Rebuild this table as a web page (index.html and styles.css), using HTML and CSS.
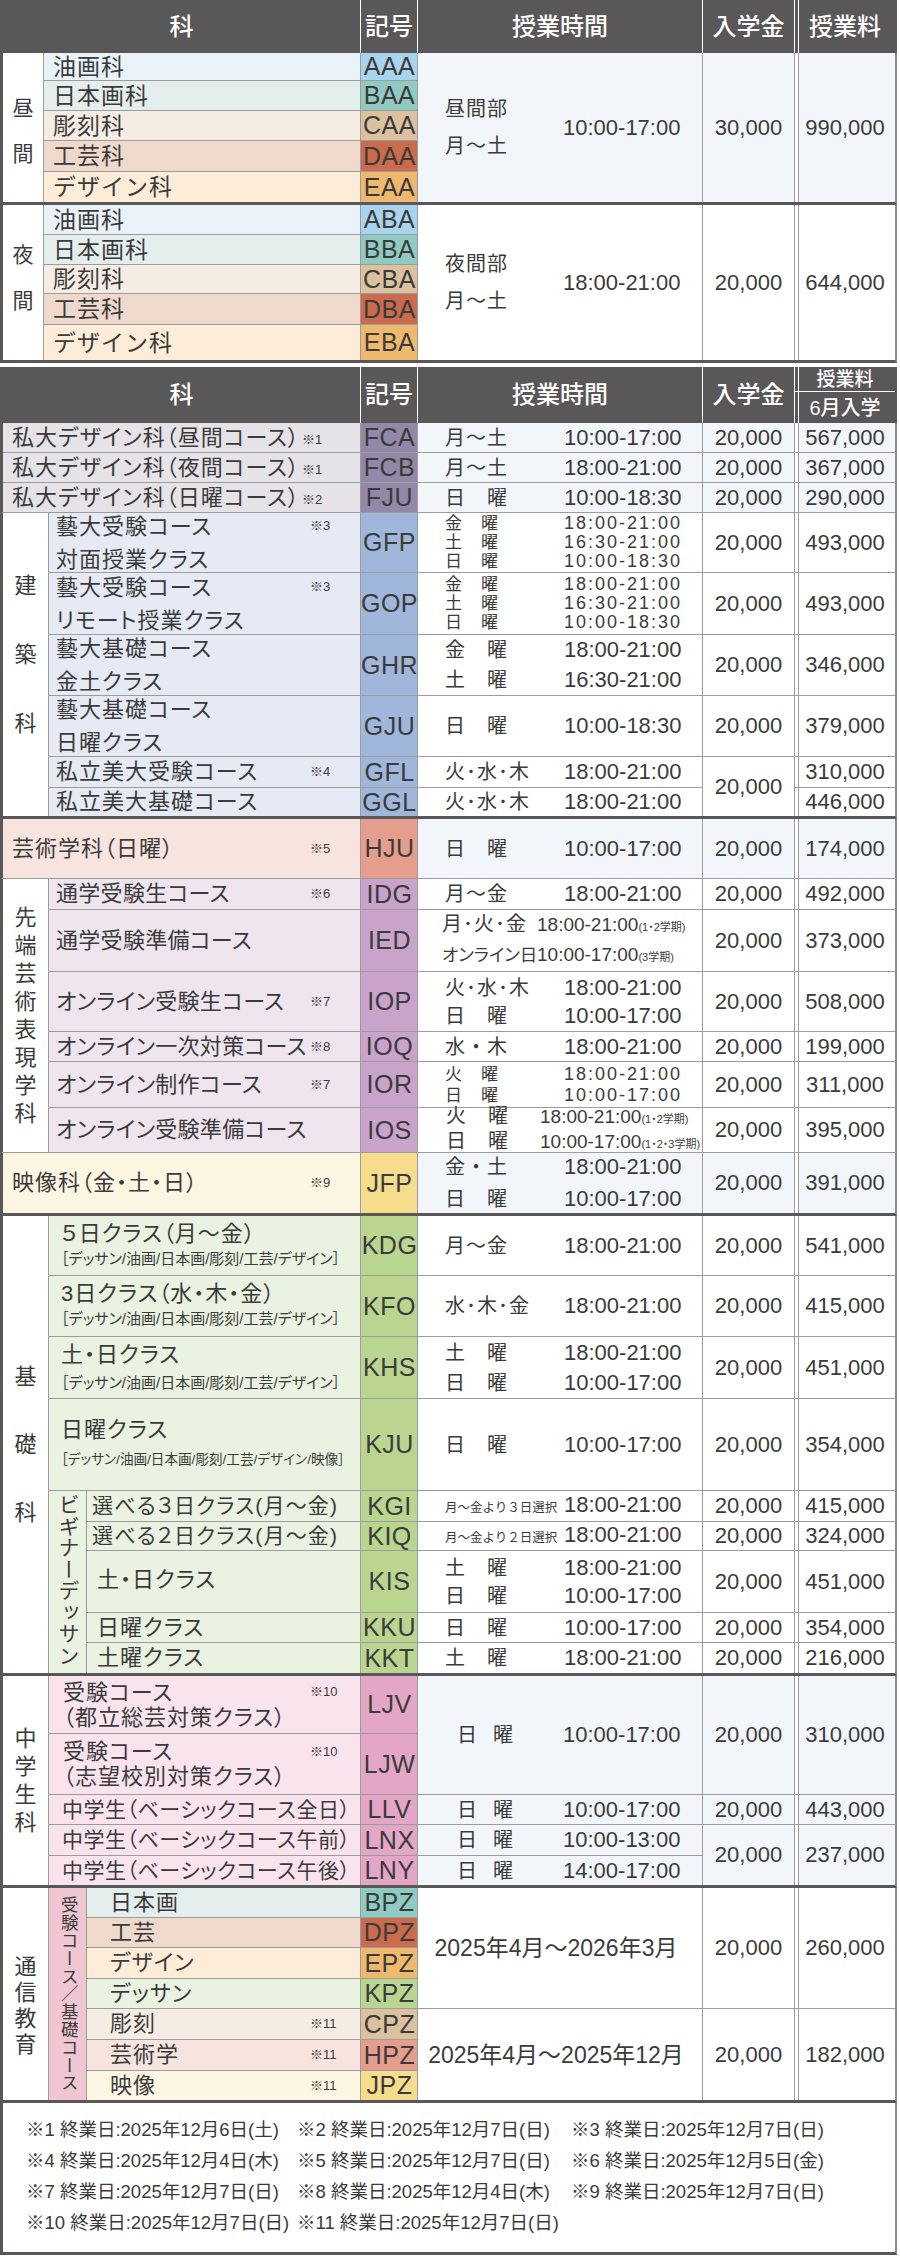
FILE: index.html
```html
<!DOCTYPE html>
<html lang="ja">
<head>
<meta charset="utf-8">
<title>授業時間・学費一覧</title>
<link rel="stylesheet" href="styles.css">
</head>
<body>
<div class="page">

  <div class="hd hd1">
    <div class="h">科</div>
    <div class="h">記号</div>
    <div class="h">授業時間</div>
    <div class="h">入学金</div>
    <div class="h ht">授業料</div>
  </div>

  <div class="sec g1 rDay thick">
    <div class="c lab l1 r5 pt6"><span>昼</span><span>間</span></div>
    <div class="c nm1 nOil">油画科</div>
    <div class="c cd cOil">AAA</div>
    <div class="c tm1 r5 bl">
      <div class="tp"><span>昼間部</span><span>月～土</span></div>
      <span class="t">10:00-17:00</span>
    </div>
    <div class="c fe r5 bl">30,000</div>
    <div class="c tu r5 bl">990,000</div>
    <div class="c nm1 nNih">日本画科</div>
    <div class="c cd cNih">BAA</div>
    <div class="c nm1 nCho">彫刻科</div>
    <div class="c cd cCho">CAA</div>
    <div class="c nm1 nKog">工芸科</div>
    <div class="c cd cKog">DAA</div>
    <div class="c nm1 nDes">デザイン科</div>
    <div class="c cd cDes">EAA</div>
  </div>

  <div class="sec g1 rNight thick">
    <div class="c lab l1 r5 pb10"><span>夜</span><span>間</span></div>
    <div class="c nm1 nOil">油画科</div>
    <div class="c cd cOil">ABA</div>
    <div class="c tm1 r5">
      <div class="tp"><span>夜間部</span><span>月～土</span></div>
      <span class="t">18:00-21:00</span>
    </div>
    <div class="c fe r5">20,000</div>
    <div class="c tu r5">644,000</div>
    <div class="c nm1 nNih">日本画科</div>
    <div class="c cd cNih">BBA</div>
    <div class="c nm1 nCho">彫刻科</div>
    <div class="c cd cCho">CBA</div>
    <div class="c nm1 nKog">工芸科</div>
    <div class="c cd cKog">DBA</div>
    <div class="c nm1 nDes">デザイン科</div>
    <div class="c cd cDes">EBA</div>
  </div>

  <div class="hd hd2">
    <div class="h r2">科</div>
    <div class="h r2">記号</div>
    <div class="h r2">授業時間</div>
    <div class="h r2">入学金</div>
    <div class="h ht hs">授業料</div>
    <div class="h ht hs2">6月入学</div>
  </div>

  <!-- 私大デザイン科 -->
  <div class="sec g2 rA thin">
    <div class="c nm cs3 p9 nShi"><div class="ln">私大デザイン科（昼間コース）<span class="ns">※1</span></div></div>
    <div class="c cd cShi">FCA</div>
    <div class="c tm bl"><div class="tl"><span class="d">月～土</span><span class="t">10:00-17:00</span></div></div>
    <div class="c fe bl">20,000</div>
    <div class="c tu bl">567,000</div>

    <div class="c nm cs3 p9 nShi"><div class="ln">私大デザイン科（夜間コース）<span class="ns">※1</span></div></div>
    <div class="c cd cShi">FCB</div>
    <div class="c tm bl"><div class="tl"><span class="d">月～土</span><span class="t">18:00-21:00</span></div></div>
    <div class="c fe bl">20,000</div>
    <div class="c tu bl">367,000</div>

    <div class="c nm cs3 p9 nShi"><div class="ln">私大デザイン科（日曜コース）<span class="ns">※2</span></div></div>
    <div class="c cd cShi">FJU</div>
    <div class="c tm bl"><div class="tl"><span class="d">日　曜</span><span class="t">10:00-18:30</span></div></div>
    <div class="c fe bl">20,000</div>
    <div class="c tu bl">290,000</div>
  </div>

  <!-- 建築科 -->
  <div class="sec g2 rB thick">
    <div class="c lab r6 gap47 pb20"><span>建</span><span>築</span><span>科</span></div>

    <div class="c nm two cs2 p7 nKen"><div class="ln">藝大受験コース<span class="nt">※3</span></div><div class="ln">対面授業クラス</div></div>
    <div class="c cd cKen">GFP</div>
    <div class="c tm lh19 tight">
      <div class="tl"><span class="d">金　曜</span><span class="t">18:00-21:00</span></div>
      <div class="tl"><span class="d">土　曜</span><span class="t">16:30-21:00</span></div>
      <div class="tl"><span class="d">日　曜</span><span class="t">10:00-18:30</span></div>
    </div>
    <div class="c fe">20,000</div>
    <div class="c tu">493,000</div>

    <div class="c nm two cs2 p7 nKen"><div class="ln">藝大受験コース<span class="nt">※3</span></div><div class="ln">リモート授業クラス</div></div>
    <div class="c cd cKen">GOP</div>
    <div class="c tm lh19 tight">
      <div class="tl"><span class="d">金　曜</span><span class="t">18:00-21:00</span></div>
      <div class="tl"><span class="d">土　曜</span><span class="t">16:30-21:00</span></div>
      <div class="tl"><span class="d">日　曜</span><span class="t">10:00-18:30</span></div>
    </div>
    <div class="c fe">20,000</div>
    <div class="c tu">493,000</div>

    <div class="c nm two cs2 p7 nKen"><div class="ln">藝大基礎コース</div><div class="ln">金土クラス</div></div>
    <div class="c cd cKen">GHR</div>
    <div class="c tm">
      <div class="tl"><span class="d">金　曜</span><span class="t">18:00-21:00</span></div>
      <div class="tl"><span class="d">土　曜</span><span class="t">16:30-21:00</span></div>
    </div>
    <div class="c fe">20,000</div>
    <div class="c tu">346,000</div>

    <div class="c nm two cs2 p7 nKen"><div class="ln">藝大基礎コース</div><div class="ln">日曜クラス</div></div>
    <div class="c cd cKen">GJU</div>
    <div class="c tm"><div class="tl"><span class="d">日　曜</span><span class="t">10:00-18:30</span></div></div>
    <div class="c fe">20,000</div>
    <div class="c tu">379,000</div>

    <div class="c nm cs2 p7 nKen"><div class="ln">私立美大受験コース<span class="nt">※4</span></div></div>
    <div class="c cd cKen">GFL</div>
    <div class="c tm"><div class="tl"><span class="d">火･水･木</span><span class="t">18:00-21:00</span></div></div>
    <div class="c fe r2">20,000</div>
    <div class="c tu">310,000</div>

    <div class="c nm cs2 p7 nKen"><div class="ln">私立美大基礎コース</div></div>
    <div class="c cd cKen">GGL</div>
    <div class="c tm"><div class="tl"><span class="d">火･水･木</span><span class="t">18:00-21:00</span></div></div>
    <div class="c tu">446,000</div>
  </div>

  <!-- 芸術学科 -->
  <div class="sec g2 rC thin">
    <div class="c nm cs3 p9 nGei"><div class="ln">芸術学科（日曜）<span class="nt">※5</span></div></div>
    <div class="c cd cGei">HJU</div>
    <div class="c tm bl"><div class="tl"><span class="d">日　曜</span><span class="t">10:00-17:00</span></div></div>
    <div class="c fe bl">20,000</div>
    <div class="c tu bl">174,000</div>
  </div>

  <!-- 先端芸術表現学科 -->
  <div class="sec g2 rD thin">
    <div class="c lab r6 gap6"><span>先</span><span>端</span><span>芸</span><span>術</span><span>表</span><span>現</span><span>学</span><span>科</span></div>

    <div class="c nm nd cs2 p7 nSen"><div class="ln">通学受験生コース<span class="nt">※6</span></div></div>
    <div class="c cd cSen">IDG</div>
    <div class="c tm"><div class="tl"><span class="d">月～金</span><span class="t">18:00-21:00</span></div></div>
    <div class="c fe">20,000</div>
    <div class="c tu">492,000</div>

    <div class="c nm nd cs2 p7 nSen"><div class="ln">通学受験準備コース</div></div>
    <div class="c cd cSen">IED</div>
    <div class="c tm tw">
      <div class="tl"><span class="d">月･火･金</span><span class="t">18:00-21:00<span class="q">(1・2学期)</span></span></div>
      <div class="tl"><span class="d dp">オンライン日</span><span class="t">10:00-17:00<span class="q">(3学期)</span></span></div>
    </div>
    <div class="c fe">20,000</div>
    <div class="c tu">373,000</div>

    <div class="c nm nd cs2 p7 nSen"><div class="ln">オンライン受験生コース<span class="nt">※7</span></div></div>
    <div class="c cd cSen">IOP</div>
    <div class="c tm lh28">
      <div class="tl"><span class="d">火･水･木</span><span class="t">18:00-21:00</span></div>
      <div class="tl"><span class="d">日　曜</span><span class="t">10:00-17:00</span></div>
    </div>
    <div class="c fe">20,000</div>
    <div class="c tu">508,000</div>

    <div class="c nm nd cs2 p7 nSen"><div class="ln">オンライン一次対策コース<span class="nt">※8</span></div></div>
    <div class="c cd cSen">IOQ</div>
    <div class="c tm"><div class="tl"><span class="d">水・木</span><span class="t">18:00-21:00</span></div></div>
    <div class="c fe">20,000</div>
    <div class="c tu">199,000</div>

    <div class="c nm nd cs2 p7 nSen"><div class="ln">オンライン制作コース<span class="nt">※7</span></div></div>
    <div class="c cd cSen">IOR</div>
    <div class="c tm lh20 tight">
      <div class="tl"><span class="d">火　曜</span><span class="t">18:00-21:00</span></div>
      <div class="tl"><span class="d">日　曜</span><span class="t">10:00-17:00</span></div>
    </div>
    <div class="c fe">20,000</div>
    <div class="c tu">311,000</div>

    <div class="c nm nd cs2 p7 nSen"><div class="ln">オンライン受験準備コース</div></div>
    <div class="c cd cSen">IOS</div>
    <div class="c tm tos">
      <div class="tl"><span class="d">火　曜</span><span class="t">18:00-21:00<span class="q">(1・2学期)</span></span></div>
      <div class="tl"><span class="d">日　曜</span><span class="t">10:00-17:00<span class="q">(1・2・3学期)</span></span></div>
    </div>
    <div class="c fe">20,000</div>
    <div class="c tu">395,000</div>
  </div>

  <!-- 映像科 -->
  <div class="sec g2 rE thick">
    <div class="c nm cs3 p9 nEiz"><div class="ln">映像科（金・土・日）<span class="nt">※9</span></div></div>
    <div class="c cd cEiz">JFP</div>
    <div class="c tm bl lh32">
      <div class="tl"><span class="d">金・土</span><span class="t">18:00-21:00</span></div>
      <div class="tl"><span class="d">日　曜</span><span class="t">10:00-17:00</span></div>
    </div>
    <div class="c fe bl">20,000</div>
    <div class="c tu bl">391,000</div>
  </div>

  <!-- 基礎科 -->
  <div class="sec g2 rF thick">
    <div class="c lab r9 gap46"><span>基</span><span>礎</span><span>科</span></div>

    <div class="c nm cs2 p12 nKis"><div class="ln lh26">５日クラス（月～金）</div><div class="ln sm lh24">［デッサン/油画/日本画/彫刻/工芸/デザイン］</div></div>
    <div class="c cd cKis">KDG</div>
    <div class="c tm"><div class="tl"><span class="d">月～金</span><span class="t">18:00-21:00</span></div></div>
    <div class="c fe">20,000</div>
    <div class="c tu">541,000</div>

    <div class="c nm cs2 p12 nKis"><div class="ln lh26">3日クラス（水・木・金）</div><div class="ln sm lh24">［デッサン/油画/日本画/彫刻/工芸/デザイン］</div></div>
    <div class="c cd cKis">KFO</div>
    <div class="c tm"><div class="tl"><span class="d">水･木･金</span><span class="t">18:00-21:00</span></div></div>
    <div class="c fe">20,000</div>
    <div class="c tu">415,000</div>

    <div class="c nm cs2 p12 nKis"><div class="ln lh30">土・日クラス</div><div class="ln sm lh26">［デッサン/油画/日本画/彫刻/工芸/デザイン］</div></div>
    <div class="c cd cKis">KHS</div>
    <div class="c tm">
      <div class="tl"><span class="d">土　曜</span><span class="t">18:00-21:00</span></div>
      <div class="tl"><span class="d">日　曜</span><span class="t">10:00-17:00</span></div>
    </div>
    <div class="c fe">20,000</div>
    <div class="c tu">451,000</div>

    <div class="c nm cs2 p12 nKis"><div class="ln lh30">日曜クラス</div><div class="ln sm2 lh30">［デッサン/油画/日本画/彫刻/工芸/デザイン/映像］</div></div>
    <div class="c cd cKis">KJU</div>
    <div class="c tm"><div class="tl"><span class="d">日　曜</span><span class="t">10:00-17:00</span></div></div>
    <div class="c fe">20,000</div>
    <div class="c tu">354,000</div>

    <div class="c sub r5 nKis"><span class="vt">ビギナーデッサン</span></div>
    <div class="c nm p5 nKis nb"><div class="ln">選べる３日クラス(月～金)</div></div>
    <div class="c cd cKis">KGI</div>
    <div class="c tm"><div class="tl"><span class="d sd">月～金より３日選択</span><span class="t">18:00-21:00</span></div></div>
    <div class="c fe">20,000</div>
    <div class="c tu">415,000</div>

    <div class="c nm p5 nKis nb"><div class="ln">選べる２日クラス(月～金)</div></div>
    <div class="c cd cKis">KIQ</div>
    <div class="c tm"><div class="tl"><span class="d sd">月～金より２日選択</span><span class="t">18:00-21:00</span></div></div>
    <div class="c fe">20,000</div>
    <div class="c tu">324,000</div>

    <div class="c nm p10 nKis pb4"><div class="ln">土・日クラス</div></div>
    <div class="c cd cKis">KIS</div>
    <div class="c tm lh27">
      <div class="tl"><span class="d">土　曜</span><span class="t">18:00-21:00</span></div>
      <div class="tl"><span class="d">日　曜</span><span class="t">10:00-17:00</span></div>
    </div>
    <div class="c fe">20,000</div>
    <div class="c tu">451,000</div>

    <div class="c nm p10 nKis"><div class="ln">日曜クラス</div></div>
    <div class="c cd cKis">KKU</div>
    <div class="c tm"><div class="tl"><span class="d">日　曜</span><span class="t">10:00-17:00</span></div></div>
    <div class="c fe">20,000</div>
    <div class="c tu">354,000</div>

    <div class="c nm p10 nKis"><div class="ln">土曜クラス</div></div>
    <div class="c cd cKis">KKT</div>
    <div class="c tm"><div class="tl"><span class="d">土　曜</span><span class="t">18:00-21:00</span></div></div>
    <div class="c fe">20,000</div>
    <div class="c tu">216,000</div>
  </div>

  <!-- 中学生科 -->
  <div class="sec g2 rG thick">
    <div class="c lab r5 gap6"><span>中</span><span>学</span><span>生</span><span>科</span></div>

    <div class="c nm cs2 p14 nChu"><div class="ln lh25">受験コース<span class="nt">※10</span></div><div class="ln lh25">（都立総芸対策クラス）</div></div>
    <div class="c cd cChu">LJV</div>
    <div class="c tm jr r2 bl"><div class="tl"><span class="d">日　曜</span><span class="t">10:00-17:00</span></div></div>
    <div class="c fe r2 bl">20,000</div>
    <div class="c tu r2 bl">310,000</div>

    <div class="c nm cs2 p14 nChu"><div class="ln lh25">受験コース<span class="nt">※10</span></div><div class="ln lh25">（志望校別対策クラス）</div></div>
    <div class="c cd cChu">LJW</div>

    <div class="c nm nj cs2 p13 nChu"><div class="ln">中学生（ベーシックコース全日）</div></div>
    <div class="c cd cChu">LLV</div>
    <div class="c tm jr bl"><div class="tl"><span class="d">日　曜</span><span class="t">10:00-17:00</span></div></div>
    <div class="c fe bl">20,000</div>
    <div class="c tu bl">443,000</div>

    <div class="c nm nj cs2 p13 nChu"><div class="ln">中学生（ベーシックコース午前）</div></div>
    <div class="c cd cChu">LNX</div>
    <div class="c tm jr bl"><div class="tl"><span class="d">日　曜</span><span class="t">10:00-13:00</span></div></div>
    <div class="c fe r2 bl">20,000</div>
    <div class="c tu r2 bl">237,000</div>

    <div class="c nm nj cs2 p13 nChu"><div class="ln">中学生（ベーシックコース午後）</div></div>
    <div class="c cd cChu">LNY</div>
    <div class="c tm jr bl"><div class="tl"><span class="d">日　曜</span><span class="t">14:00-17:00</span></div></div>
  </div>

  <!-- 通信教育 -->
  <div class="sec g2 rH thick">
    <div class="c lab r7 gap4 pt24"><span>通</span><span>信</span><span>教</span><span>育</span></div>
    <div class="c sub sub2 r7 subTsu"><span class="vt vt2">受験コース／基礎コース</span></div>

    <div class="c nm p23 nNih"><div class="ln">日本画</div></div>
    <div class="c cd cNih">BPZ</div>
    <div class="c tc r4">2025年4月～2026年3月</div>
    <div class="c fe r4">20,000</div>
    <div class="c tu r4">260,000</div>

    <div class="c nm p23 nKog"><div class="ln">工芸</div></div>
    <div class="c cd cKog">DPZ</div>
    <div class="c nm p23 nDes"><div class="ln">デザイン</div></div>
    <div class="c cd cDes">EPZ</div>
    <div class="c nm p23 nKis"><div class="ln">デッサン</div></div>
    <div class="c cd cKis">KPZ</div>

    <div class="c nm p23 nCho"><div class="ln">彫刻<span class="nt">※11</span></div></div>
    <div class="c cd cCho">CPZ</div>
    <div class="c tc r3">2025年4月～2025年12月</div>
    <div class="c fe r3">20,000</div>
    <div class="c tu r3">182,000</div>

    <div class="c nm p23 nGei"><div class="ln">芸術学<span class="nt">※11</span></div></div>
    <div class="c cd cGei">HPZ</div>
    <div class="c nm p23 nEiz"><div class="ln">映像<span class="nt">※11</span></div></div>
    <div class="c cd cEiz">JPZ</div>
  </div>

  <div class="fn">
    <span>※1 終業日:2025年12月6日(土)</span>
    <span>※2 終業日:2025年12月7日(日)</span>
    <span>※3 終業日:2025年12月7日(日)</span>
    <span>※4 終業日:2025年12月4日(木)</span>
    <span>※5 終業日:2025年12月7日(日)</span>
    <span>※6 終業日:2025年12月5日(金)</span>
    <span>※7 終業日:2025年12月7日(日)</span>
    <span>※8 終業日:2025年12月4日(木)</span>
    <span>※9 終業日:2025年12月7日(日)</span>
    <span>※10 終業日:2025年12月7日(日)</span>
    <span>※11 終業日:2025年12月7日(日)</span>
  </div>

</div>
</body>
</html>
```

FILE: styles.css
```css
* { box-sizing: border-box; margin: 0; padding: 0; }
html, body { background: #fff; }
body {
  margin: 0;
  font-family: "Liberation Sans", "Noto Sans CJK JP", "Noto Sans CJK SC", sans-serif;
  color: #3b3b3b;
}
.page { width: 897px; }

/* header rows */
.hd {
  display: grid;
  gap: 1px;
  background: #fff;
  border-left: 3px solid #595757;
  border-right: 2px solid #595757;
  grid-template-columns: 357px 56px 284px 91px 100px;
}
.hd1 { grid-template-rows: 53px; }
.hd2 { grid-template-rows: 24px 31px; margin-top: 4px; }
.h {
  background: #595757;
  color: #fff;
  font-size: 24px;
  font-weight: 500;
  display: flex;
  align-items: center;
  justify-content: center;
  line-height: 1;
}
.h.ht { box-shadow: inset 3px 0 0 #595757, inset 4px 0 0 #fff; }
.hd2 .hs { font-size: 19px; }
.hd2 .hs2 { font-size: 20px; }

/* body grids */
.sec {
  display: grid;
  gap: 1px;
  background: #9c9c9c;
  border-left: 3px solid #595757;
  border-right: 2px solid #8c8c8c;
}
.g1 { grid-template-columns: 40px 316px 56px 284px 91px 100px; }
.g2 { grid-template-columns: 45px 37px 273px 56px 284px 91px 100px; }
.thick { border-bottom: 3px solid #595757; }
.thin { border-bottom: 1px solid #9c9c9c; }

.rDay { grid-template-rows: 27px 29px 29px 30px 30px; }
.rNight { grid-template-rows: 29px 29px 28px 30px 35px; }
.rA { grid-template-rows: 29px 29px 29px; }
.rB { grid-template-rows: 59px 61px 60px 60px 30px 28px; }
.rC { grid-template-rows: 59px; }
.rD { grid-template-rows: 30px 61px 59px 29px 45px 44px; }
.rE { grid-template-rows: 60px; }
.rF { grid-template-rows: 59px 60px 61px 91px 30px 28px 61px 29px 30px; }
.rG { grid-template-rows: 57px 60px 29px 30px 29px; }
.rH { grid-template-rows: 29px 29px 30px 29px 30px 30px 29px; }

.r2 { grid-row: span 2; }
.r3 { grid-row: span 3; }
.r4 { grid-row: span 4; }
.r5 { grid-row: span 5; }
.r6 { grid-row: span 6; }
.r7 { grid-row: span 7; }
.r9 { grid-row: span 9; }
.cs2 { grid-column: span 2; }
.cs3 { grid-column: span 3; }

.c {
  background: #fff;
  display: flex;
  align-items: center;
  min-width: 0;
  line-height: 24px;
}
.bl { background: #f2f6fa; }

/* vertical labels */
.lab {
  flex-direction: column;
  justify-content: center;
  align-items: center;
  font-size: 22px;
  line-height: 22px;
}
.lab.l1 { font-size: 21px; gap: 24px; }
.gap47 { gap: 47px; }
.gap46 { gap: 46px; }
.gap6 { gap: 6px; }
.gap4 { gap: 4px; }
.pt6 { padding-top: 6px; }
.pb10 { padding-bottom: 10px; }
.pb20 { padding-bottom: 20px; }
.pt24 { padding-top: 24px; }
.pb4 { padding-bottom: 4px; }

.sub { justify-content: center; align-items: flex-start; padding-top: 3px; }
.vt {
  writing-mode: vertical-rl;
  font-size: 21px;
  line-height: 1;
  letter-spacing: 0.5px;
}
.sub2 { padding-top: 8px; }
.vt2 { font-size: 17.5px; letter-spacing: 0.3px; }

/* names */
.nm1 {
  font-size: 23px;
  letter-spacing: 1px;
  padding-left: 9px;
  white-space: nowrap;
}
.nm {
  flex-direction: column;
  justify-content: center;
  align-items: stretch;
  font-size: 22px;
  letter-spacing: 1px;
  font-feature-settings: "palt";
}
.ln {
  display: flex;
  align-items: center;
  white-space: nowrap;
  line-height: 26px;
}
.nm.two .ln { line-height: 33px; }
.nd { letter-spacing: 0.3px; }
.nj { font-size: 21px; letter-spacing: 0.5px; }
.lh24 { line-height: 24px; }
.lh25 { line-height: 25px; }
.lh26 { line-height: 26px; }
.lh30 { line-height: 30px; }
.sm { font-size: 15px; letter-spacing: 0; }
.sm2 { font-size: 13.6px; letter-spacing: 0; }
.nb { font-size: 21px; letter-spacing: 1.2px; }
.p5 { padding-left: 5px; }
.p7 { padding-left: 7px; }
.p9 { padding-left: 9px; }
.p10 { padding-left: 10px; }
.p12 { padding-left: 12px; }
.p13 { padding-left: 13px; }
.p14 { padding-left: 14px; }
.p23 { padding-left: 23px; }
.nt {
  margin-left: auto;
  flex: 0 0 50px;
  font-size: 13px;
  letter-spacing: 0;
  line-height: 16px;
}
.ns {
  font-size: 13px;
  letter-spacing: 0;
  margin-left: 2px;
  margin-top: 4px;
  line-height: 16px;
}

/* codes */
.cd {
  justify-content: center;
  font-size: 25px;
  letter-spacing: 0.5px;
  padding-left: 1px;
  line-height: 1;
}
.cOil { background: #a9d4ee; }
.cNih { background: #8fcbc2; }
.cCho { background: #dcc19e; }
.cKog { background: #c96b4c; }
.cDes { background: #efb86f; }
.cShi { background: #9388a8; }
.cKen { background: #a0b7db; }
.cGei { background: #e59e8d; }
.cSen { background: #c9a3c9; }
.cEiz { background: #f6dd8c; }
.cKis { background: #bad590; }
.cChu { background: #e4a6c6; }

.nOil { background: #e9f2f8; }
.nNih { background: #e4eeec; }
.nCho { background: #f5ece3; }
.nKog { background: #eed9cc; }
.nDes { background: #fcecd8; }
.nShi { background: #e6e3e8; }
.nKen { background: #e6eaf4; }
.nGei { background: #f7e4df; }
.nSen { background: #efe5ef; }
.nEiz { background: #fdf6e2; }
.nKis { background: #eaf2e1; }
.nChu { background: #f9e4ed; }
.subTsu { background: #efc6d1; }

/* times */
.tm1 { padding-left: 27px; }
.tp {
  display: flex;
  flex-direction: column;
  width: 118px;
  font-size: 20px;
  line-height: 37px;
  letter-spacing: 1px;
}
.tm {
  flex-direction: column;
  justify-content: center;
  align-items: flex-start;
  padding-left: 27px;
}
.tl {
  display: grid;
  grid-template-columns: 119px auto;
  align-items: baseline;
  line-height: 30px;
  white-space: nowrap;
}
.d { font-size: 20px; letter-spacing: 1px; }
.t { font-size: 22px; }
.lh19 .tl { line-height: 19px; }
.lh20 .tl { line-height: 20px; }
.lh27 .tl { line-height: 27px; }
.lh28 .tl { line-height: 28px; }
.lh32 .tl { line-height: 32px; }
.tight .d { font-size: 17px; }
.tight .t { font-size: 18px; letter-spacing: 2px; }
.sd { font-size: 12.5px; letter-spacing: 0; }
.q { font-size: 11px; letter-spacing: 0; font-feature-settings: "palt"; }

.tw { padding-left: 24px; }
.tw .tl { grid-template-columns: 95px auto; line-height: 28px; }
.tw .t { font-size: 19px; }
.dp { font-size: 17.5px; letter-spacing: 0; font-feature-settings: "palt"; }

.tos { padding-left: 28px; }
.tos .tl { grid-template-columns: 94px auto; line-height: 22px; }
.tos .t { font-size: 19px; }

.jr { padding-left: 39px; }
.jr .tl { grid-template-columns: 106px auto; }
.jr .d { letter-spacing: -2px; }

.tc { justify-content: center; font-size: 23px; padding-right: 8px; white-space: nowrap; }

/* fees */
.fe { justify-content: center; font-size: 22px; }
.tu {
  justify-content: center;
  font-size: 22px;
  box-shadow: inset 3px 0 0 #fff, inset 4px 0 0 #9c9c9c;
}

/* footnotes */
.fn {
  height: 152px;
  border-left: 3px solid #595757;
  border-right: 2px solid #8c8c8c;
  border-bottom: 3px solid #595757;
  padding: 11px 0 0 23px;
  display: grid;
  grid-template-columns: 271px 274px auto;
  grid-auto-rows: 31px;
  align-content: start;
  align-items: center;
  font-size: 18.5px;
  line-height: 24px;
  white-space: nowrap;
}
```
